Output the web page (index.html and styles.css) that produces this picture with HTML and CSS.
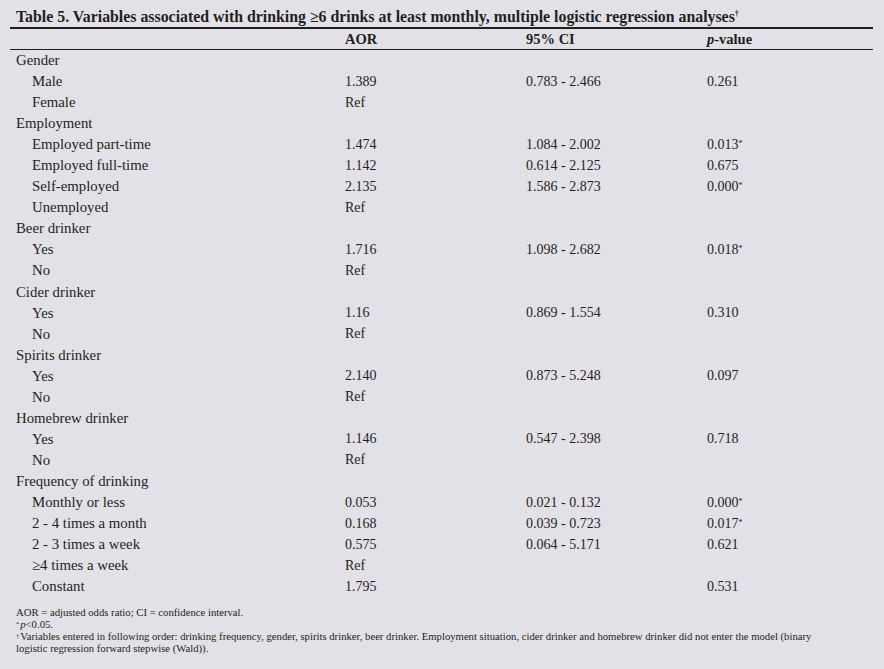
FILE: index.html
```html
<!DOCTYPE html>
<html>
<head>
<meta charset="utf-8">
<link rel="stylesheet" href="styles.css">
</head>
<body>
<div class="page">
  <div class="title">Table 5. Variables associated with drinking ≥6 drinks at least monthly, multiple logistic regression analyses<sup>†</sup></div>
  <div class="table">
    <div class="row head"><span></span><span>AOR</span><span>95% CI</span><span><i>p</i>-value</span></div>
    <div class="row"><span class="cat">Gender</span><span></span><span></span><span></span></div>
    <div class="row"><span class="sub">Male</span><span>1.389</span><span>0.783 - 2.466</span><span>0.261</span></div>
    <div class="row"><span class="sub">Female</span><span>Ref</span><span></span><span></span></div>
    <div class="row"><span class="cat">Employment</span><span></span><span></span><span></span></div>
    <div class="row"><span class="sub">Employed part-time</span><span>1.474</span><span>1.084 - 2.002</span><span>0.013<sup>*</sup></span></div>
    <div class="row"><span class="sub">Employed full-time</span><span>1.142</span><span>0.614 - 2.125</span><span>0.675</span></div>
    <div class="row"><span class="sub">Self-employed</span><span>2.135</span><span>1.586 - 2.873</span><span>0.000<sup>*</sup></span></div>
    <div class="row"><span class="sub">Unemployed</span><span>Ref</span><span></span><span></span></div>
    <div class="row"><span class="cat">Beer drinker</span><span></span><span></span><span></span></div>
    <div class="row"><span class="sub">Yes</span><span>1.716</span><span>1.098 - 2.682</span><span>0.018<sup>*</sup></span></div>
    <div class="row"><span class="sub">No</span><span>Ref</span><span></span><span></span></div>
    <div class="row"><span class="cat">Cider drinker</span><span></span><span></span><span></span></div>
    <div class="row"><span class="sub">Yes</span><span>1.16</span><span>0.869 - 1.554</span><span>0.310</span></div>
    <div class="row"><span class="sub">No</span><span>Ref</span><span></span><span></span></div>
    <div class="row"><span class="cat">Spirits drinker</span><span></span><span></span><span></span></div>
    <div class="row"><span class="sub">Yes</span><span>2.140</span><span>0.873 - 5.248</span><span>0.097</span></div>
    <div class="row"><span class="sub">No</span><span>Ref</span><span></span><span></span></div>
    <div class="row"><span class="cat">Homebrew drinker</span><span></span><span></span><span></span></div>
    <div class="row"><span class="sub">Yes</span><span>1.146</span><span>0.547 - 2.398</span><span>0.718</span></div>
    <div class="row"><span class="sub">No</span><span>Ref</span><span></span><span></span></div>
    <div class="row"><span class="cat">Frequency of drinking</span><span></span><span></span><span></span></div>
    <div class="row"><span class="sub">Monthly or less</span><span>0.053</span><span>0.021 - 0.132</span><span>0.000<sup>*</sup></span></div>
    <div class="row"><span class="sub">2 - 4 times a month</span><span>0.168</span><span>0.039 - 0.723</span><span>0.017<sup>*</sup></span></div>
    <div class="row"><span class="sub">2 - 3 times a week</span><span>0.575</span><span>0.064 - 5.171</span><span>0.621</span></div>
    <div class="row"><span class="sub">≥4 times a week</span><span>Ref</span><span></span><span></span></div>
    <div class="row"><span class="sub">Constant</span><span>1.795</span><span></span><span>0.531</span></div>
  </div>
  <div class="notes">
    <p>AOR = adjusted odds ratio; CI = confidence interval.</p>
    <p><sup>*</sup><i>p</i>&lt;0.05.</p>
    <p><sup>†</sup>Variables entered in following order: drinking frequency, gender, spirits drinker, beer drinker. Employment situation, cider drinker and homebrew drinker did not enter the model (binary logistic regression forward stepwise (Wald)).</p>
  </div>
</div>
</body>
</html>
```

FILE: styles.css
```css
html, body {
  margin: 0;
  padding: 0;
  background: #e2e1e7;
}
body {
  font-family: "Liberation Serif", "DejaVu Serif", serif;
  color: #231f20;
}
.page {
  padding: 7px 0 0 10px;
  width: 863px;
}
.title {
  font-weight: bold;
  font-size: 15.85px;
  line-height: 20px;
  padding-left: 6px;
  white-space: nowrap;
}
.title sup {
  font-size: 8px;
  line-height: 0;
  vertical-align: 6px;
}
.table {
  border-top: 2px solid #231f20;
}
.row {
  display: grid;
  grid-template-columns: 335px 181px 181px 1fr;
  height: 21.05px;
  align-items: center;
  font-size: 14px;
}
.row.head {
  height: 20px;
  font-weight: bold;
  font-size: 14.5px;
  border-bottom: 1px solid #231f20;
}
.row.head i {
  font-style: italic;
}
.row sup {
  font-size: 8px;
  line-height: 0;
  vertical-align: 3px;
}
.cat, .sub {
  font-size: 14.8px;
}
.cat {
  padding-left: 6px;
}
.sub {
  padding-left: 22px;
}
.notes {
  margin-top: 10px;
  padding-left: 6px;
  font-size: 10.7px;
  line-height: 11.9px;
  width: 818px;
}
.notes p {
  margin: 0;
}
.notes sup {
  font-size: 6.5px;
  line-height: 0;
  vertical-align: 2px;
  margin-right: 1px;
}
```
